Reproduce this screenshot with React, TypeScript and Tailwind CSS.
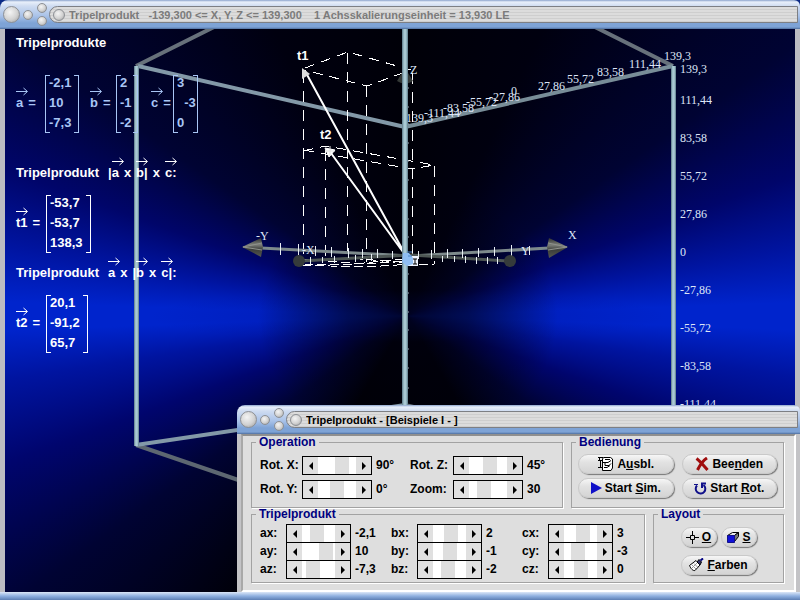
import { useRef, type ReactNode } from "react";

type Vec = { values: string[]; width: string };

const xLabels: [number, number, string][] = [
  [402, 122, "-139,3"],
  [424, 117, "-111,44"],
  [443, 112, "-83,58"],
  [466, 106, "-55,72"],
  [489, 101, "-27,86"],
  [511, 95, "0"],
  [538, 90, "27,86"],
  [567, 83, "55,72"],
  [597, 76, "83,58"],
  [629, 68, "111,44"],
  [664, 60, "139,3"],
];

const zLabels: [number, string][] = [
  [73, "139,3"],
  [104, "111,44"],
  [142, "83,58"],
  [180, "55,72"],
  [218, "27,86"],
  [256, "0"],
  [294, "-27,86"],
  [332, "-55,72"],
  [370, "-83,58"],
  [408, "-111,44"],
];

const Scene = () => (
  <svg
    className="absolute inset-0 h-full w-full"
    viewBox="5 29 790 563"
    preserveAspectRatio="xMidYMid slice"
    role="img"
    aria-label="Tripelprodukt 3D"
  >
    <defs>
      <linearGradient id="pole" x1="0" x2="1" y1="0" y2="0">
        <stop offset="0" stopColor="#5b7886" />
        <stop offset="0.35" stopColor="#a9c9d3" />
        <stop offset="0.65" stopColor="#a9c9d3" />
        <stop offset="1" stopColor="#5b7886" />
      </linearGradient>
      <linearGradient id="cone" x1="0" x2="0" y1="0" y2="1">
        <stop offset="0" stopColor="#2e302e" />
        <stop offset="0.35" stopColor="#7c7f7a" />
        <stop offset="0.6" stopColor="#3c3e3b" />
        <stop offset="1" stopColor="#55574f" />
      </linearGradient>
    </defs>

    {/* cube edges */}
    <g fill="none" strokeWidth="4">
      <path d="M136 66 214 27M673 66 595 27" stroke="#67717b" />
      <path d="M136 445 250 484" stroke="#5d6771" />
      <path d="M138 66 405 127M136 445 405 405" stroke="#8399a8" />
      <path d="M405 127 673 66" stroke="#788d98" />
    </g>

    {/* dashed boxes */}
    <g fill="none" stroke="#fff" strokeWidth="1" shapeRendering="crispEdges">
      <path
        strokeDasharray="11 8"
        d="M303.500 72V264M325.500 150V262M347.500 53V262M366.500 86V262M412.500 73V262M434.500 166V264"
      />
      <path
        strokeDasharray="10 7"
        d="M305 68 348 52 411 70 367 86 304 70M303 151 326 146 434 165 412 169 303 150"
      />
      <path
        strokeDasharray="9 4"
        d="M302 265 330 266 366 267 412 264 434 265M302 261 347 258 412 263M304 264 345 265 411 258M302 259 366 264 410 261"
      />
    </g>

    {/* axes */}
    <g fill="none">
      <path d="M261 248 411 256" stroke="#7d8a8c" strokeWidth="3" />
      <path d="M411 256 549 248" stroke="#7d8a8c" strokeWidth="3" />
      <path d="M300 261 411 255 508 261" stroke="#4d5654" strokeWidth="3" />
      <path
        stroke="#e8eef4"
        d="M280.500 243v12M298.500 244v11M315.500 246v10M331.500 247v10M348.500 248v10M362.500 249v9M377.500 249v9M392.500 251v8M418.500 251v8M431.500 250v9M447.500 249v9M462.500 249v9M478.500 248v9M494.500 247v9M511.500 245v11M529.500 246v9M442.500 256v6M454.500 256v6M465.500 256v7M476.500 257v7M487.500 257v7M497.500 257v7M507.500 258v6M310.500 257v7M322.500 257v6M334.500 256v7M355.500 255v7M371.500 254v7"
      />
      <path
        stroke="#9aa6b2"
        d="M407 88h2M407 107h2M407 124h2M407 143h2M402 143h2M407 161h2M407 180h2M402 180h2M407 200h2M407 219h2M407 237h2M407 274h2M407 293h2M407 312h2M407 330h2M407 349h2M407 368h2M407 388h2"
      />
    </g>
    <path d="M242 247 261 238 263 247 261 257Z" fill="url(#cone)" />
    <path d="M568 247 549 238 547 247 549 258Z" fill="url(#cone)" />
    <path d="M243 247 262 243M243 247 262 250M567 247 548 243M567 247 548 250" stroke="#8f928c" />
    <circle cx="299" cy="261" r="6" fill="#353b3b" />
    <circle cx="510" cy="261" r="6" fill="#353b3b" />
    <path d="M405 68 397 81Q405 86 413 81Z" fill="#343937" />

    <g className="font-['Liberation_Serif',serif] text-[12px]" fill="#dfe6f7">
      {xLabels.map(([x, y, label]) => (
        <text key={label} x={x} y={y}>{label}</text>
      ))}
      {zLabels.map(([y, label]) => (
        <text key={label} x="680" y={y}>{label}</text>
      ))}
      <text x="256" y="240">-Y</text>
      <text x="568" y="239">X</text>
      <text x="410" y="74">Z</text>
      <text x="302" y="254">-X</text>
      <text x="521" y="255">Y</text>
    </g>

    <path d="M402 405Q405 402 414 405Z" fill="#67717b" />
    <rect x="134" y="66" width="5" height="380" fill="url(#pole)" />
    <rect x="671" y="66" width="5" height="380" fill="url(#pole)" />

    {/* result vectors */}
    <path d="M406 256 305 71M406 256 328 149" stroke="#fff" strokeWidth="2" />
    <path d="M302 68 302 79 310 74Z" fill="#dcdcdc" />
    <path d="M325 148 335 150 329 157Z" fill="#fff" stroke="#fff" />
    <path d="M325 151h10M330 146v10" stroke="#ddd" />
    <rect x="405" y="256" width="13" height="10" fill="#eef4ff" />
    <path d="M413 259h4M415 259v5M413 264h4" stroke="#000" />
    <rect x="402" y="29" width="6" height="376" fill="url(#pole)" />
    <path d="M403 253h6l4 5v6l-6 2-5-4z" fill="#8fbdf2" />
    <path d="M407 252h5M408 256h4" stroke="#4f86c8" />

    <g className="font-['Liberation_Sans',sans-serif] text-[13px] font-bold" fill="#fff">
      <text x="297" y="60">t1</text>
      <text x="320" y="139">t2</text>
    </g>
  </svg>
);

/* letter with a vector arrow above it */
const Arrowed = ({ children }: { children: ReactNode }) => (
  <span className="relative inline-block">
    <svg
      className="absolute -top-[6px] left-0"
      width="13"
      height="9"
      fill="none"
      stroke="currentColor"
      aria-hidden="true"
    >
      <path d="M0 4.500H11M7.500 1 11.500 4.500 7.500 8" />
    </svg>
    {children}
  </span>
);

const Matrix = ({ values, width }: Vec) => (
  <div className={`relative pl-1 whitespace-pre ${width}`}>
    <span className="absolute top-[2px] bottom-0 left-0 w-[5px] border-y border-l border-current" />
    <span className="absolute top-[2px] right-0 bottom-0 w-[5px] border-y border-r border-current" />
    {values.map((v, i) => (
      <div key={i}>{v}</div>
    ))}
  </div>
);

const Equation = ({ name, label, ...vec }: Vec & { name: string; label: string }) => (
  <div className="flex items-center">
    <div className={`flex gap-[5px] ${label}`}>
      <Arrowed>{name}</Arrowed>
      <span>=</span>
    </div>
    <Matrix {...vec} />
  </div>
);

const Readout = () => (
  <div className="relative pt-1 pl-[11px] font-['Liberation_Sans',sans-serif] text-[13px] leading-5 font-bold text-white">
    <h1>Tripelprodukte</h1>
    <div className="mt-5 flex text-[#a9c6f5]">
      <Equation name="a" label="w-[29px]" values={["-2,1", "10", "-7,3"]} width="w-[34px]" />
      <div className="w-[11px]" />
      <Equation name="b" label="w-[26px]" values={["2", "-1", "-2"]} width="w-[22px]" />
      <div className="w-[13px]" />
      <Equation name="c" label="w-[22px]" values={["3", "  -3", "0"]} width="w-[25px]" />
    </div>
    <h2 className="mt-[30px] flex gap-[5px]">
      <span className="w-[87px]">Tripelprodukt</span>
      <span>|<Arrowed>a</Arrowed></span>
      <span>x</span>
      <span><Arrowed>b</Arrowed>|</span>
      <span>x</span>
      <span><Arrowed>c</Arrowed>:</span>
    </h2>
    <div className="mt-[10px]">
      <Equation name="t1" label="w-[30px]" values={["-53,7", "-53,7", "138,3"]} width="w-[45px]" />
    </div>
    <h2 className="mt-[10px] flex gap-[5px]">
      <span className="w-[87px]">Tripelprodukt</span>
      <Arrowed>a</Arrowed>
      <span>x</span>
      <span>|<Arrowed>b</Arrowed></span>
      <span>x</span>
      <span><Arrowed>c</Arrowed>|:</span>
    </h2>
    <div className="mt-[10px]">
      <Equation name="t2" label="w-[30px]" values={["20,1", "-91,2", "65,7"]} width="w-[42px]" />
    </div>
  </div>
);

const Knob = ({ size, label }: { size: string; label: string }) => (
  <button
    aria-label={label}
    className={`shrink-0 rounded-full border border-[#8d9095] bg-[radial-gradient(circle_at_40%_35%,#f4f4f4,#d2d2d2_55%,#9a9a9a)] ${size}`}
  />
);

const TitleBar = ({ title, color }: { title: string; color: string }) => (
  <header className="flex h-[29px] items-center rounded-tl-lg rounded-tr-md bg-[linear-gradient(#8ba3cc,#e8effa_2px,#cfdcf1_6px,#a9c2e8_16px,#7ea3d6_23px,#7ea3d6_27px,#4e6f9f)] pl-[3px]">
    <Knob size="size-[17px]" label="Schließen" />
    <div className="w-[3px]" />
    <Knob size="size-[10px]" label="Fixieren" />
    <div className="ml-1 flex flex-col gap-[3px]">
      <Knob size="size-[10px]" label="Maximieren" />
      <Knob size="size-[10px]" label="Minimieren" />
    </div>
    <div className="mr-[2px] ml-[2px] flex h-[17px] min-w-0 flex-1 items-center gap-1 rounded-l-full border border-[#7d7f84] bg-[repeating-linear-gradient(#dcdcdc_0_2px,#cecece_2px_3px)] pl-[3px]">
      <Knob size="size-[12px]" label="Menü" />
      <span className={`truncate font-['Liberation_Sans',sans-serif] text-[11px] leading-4 font-bold whitespace-pre ${color}`}>
        {title}
      </span>
    </div>
  </header>
);

type SliderProps = { id: string; label: string; value: string; pos: number };

const arrowBtn = "flex w-[15px] shrink-0 items-center justify-center bg-[#e0e0e0]";

const Slider = ({ id, label, value, pos }: SliderProps) => {
  const input = useRef<HTMLInputElement>(null);
  return (
    <>
      <label htmlFor={id}>{label}</label>
      <div className="flex h-[19px] border border-black bg-white">
        <button className={arrowBtn} aria-label={`${label} -`} onClick={() => input.current?.stepDown()}>
          <svg width="4" height="8"><path d="M4 0V8L0 4Z" /></svg>
        </button>
        <input
          ref={input}
          id={id}
          type="range"
          defaultValue={pos}
          className="h-full w-full min-w-0 flex-1 appearance-none bg-white [&::-webkit-slider-thumb]:h-[17px] [&::-webkit-slider-thumb]:w-[14px] [&::-webkit-slider-thumb]:appearance-none [&::-webkit-slider-thumb]:bg-[#dedede]"
        />
        <button className={arrowBtn} aria-label={`${label} +`} onClick={() => input.current?.stepUp()}>
          <svg width="4" height="8"><path d="M0 0V8L4 4Z" /></svg>
        </button>
      </div>
      <output htmlFor={id} className="pl-1">{value}</output>
    </>
  );
};

const Group = ({ title, className, children }: { title: string; className: string; children: ReactNode }) => (
  <fieldset className={`min-w-0 border border-[#a2a2a2] shadow-[1px_1px_0_#fff] ${className}`}>
    <legend className="ml-[4px] px-[3px] leading-3 text-[#000080]">{title}</legend>
    {children}
  </fieldset>
);

const PushButton = ({ icon, className = "", children }: { icon: ReactNode; className?: string; children: ReactNode }) => (
  <button
    className={`flex h-5 items-center justify-center gap-[3px] rounded-full border border-[#c9c9c9] bg-[linear-gradient(#f6f6f6,#e2e2e2_40%,#d4d4d4)] shadow-[1px_1px_1px_#777] ${className}`}
  >
    {icon}
    <span>{children}</span>
  </button>
);

const HideIcon = () => (
  <svg width="17" height="16" fill="none" stroke="#000">
    <path d="M5.500 3 6.500 1.500H13.500L15.500 3V12L14 14.500H5.500Z" fill="#fff" />
    <path d="M1 1.500H6M2.500 1V5M1 4.500H5M3.500 5V11M1 11.500H5" />
    <path d="M8 3.500H13M6 6.500H11L14 4.500M8 6.500V9.500H12L14 7.500M7 11.500H10L13 9.500" />
  </svg>
);

const CrossIcon = () => (
  <svg width="14" height="14" fill="none" stroke="#a00d0d" strokeWidth="3">
    <path d="M1.500 1.500C5 4 9 9 12.500 13M12 1C8 3.500 5 8 2.500 13" />
  </svg>
);

const RotateIcon = () => (
  <svg width="13" height="13" fill="none" stroke="#10108a" strokeWidth="2">
    <path d="M3 3.500A4.800 4.800 0 1 0 9.500 3" />
    <path d="M8 6V1.500H12" />
    <path d="M0 2.500H4" strokeWidth="1" />
  </svg>
);

const OriginIcon = () => (
  <svg width="13" height="13" fill="none" stroke="#000">
    <path d="M0 6.500H4M9 6.500H13M6.500 0V4M6.500 9V13M4.500 4.500H8.500V8.500H4.500Z" />
  </svg>
);

const SolidIcon = () => (
  <svg width="13" height="12" stroke="#000">
    <path d="M1.500 4.500 6.500 1.500H12.500L8.500 4.500Z" fill="#e8e8e8" />
    <path d="M8.500 4.500 12.500 1.500V5.500L8.500 10.500Z" fill="#777" />
    <path d="M1.500 4.500H8.500V11.500H1.500Z" fill="#1010d8" stroke="#10108a" />
  </svg>
);

const BrushIcon = () => (
  <svg width="15" height="14" stroke="#000">
    <path d="M.5 7.500 7 2.500 11 7 6 12.500C4 13 2 11 .5 7.500Z" fill="#fff" />
    <path d="M3 7 7 11M5 5.500 9 9.500M3 10 8 5" stroke="#999" />
    <path d="M8 4 10 1.500 12.500 4 11 7Z" fill="#30306a" />
    <path d="M11.500 2.500 14 .5" stroke="#000080" strokeWidth="2" />
  </svg>
);

const components: [string, string, number][] = [
  ["ax", "-2,1", 43],
  ["bx", "2", 58],
  ["cx", "3", 62],
  ["ay", "10", 92],
  ["by", "-1", 50],
  ["cy", "-3", 36],
  ["az", "-7,3", 22],
  ["bz", "-2", 43],
  ["cz", "0", 52],
];

const ControlPanel = () => (
  <section className="absolute right-0 bottom-0 w-[563px] max-w-full font-['Liberation_Sans',sans-serif] text-[12px] leading-[18px] font-bold text-black">
    <TitleBar title="Tripelprodukt - [Beispiele I - ]" color="text-black" />
    <div className="border-x-4 border-x-[#c3c3c6] bg-[#dedede]">
      <div className="border-2 border-t-[#8f8f8f] border-r-white border-b-white border-l-[#a8a8a8] pr-[10px] pb-[7px] pl-2">
        <div className="flex gap-2">
          <Group title="Operation" className="h-[72px] flex-1">
            <div className="grid grid-cols-[42px_70px_38px_43px_70px_1fr] gap-y-[5px] pt-2 pl-2">
              <Slider id="rotx" label="Rot. X:" value="90°" pos={71} />
              <Slider id="rotz" label="Rot. Z:" value="45°" pos={57} />
              <Slider id="roty" label="Rot. Y:" value="0°" pos={50} />
              <Slider id="zoom" label="Zoom:" value="30" pos={33} />
            </div>
          </Group>
          <Group title="Bedienung" className="h-[72px] w-[213px]">
            <div className="grid grid-cols-2 gap-x-2 gap-y-1 px-[6px] pt-[6px]">
              <PushButton icon={<HideIcon />}>A<u>u</u>sbl.</PushButton>
              <PushButton icon={<CrossIcon />}>Bee<u>n</u>den</PushButton>
              <PushButton
                icon={<svg width="11" height="12"><path d="M0 0 11 6 0 12Z" fill="#1010c8" /></svg>}
              >
                Start <u>S</u>im.
              </PushButton>
              <PushButton icon={<RotateIcon />}>Start <u>R</u>ot.</PushButton>
            </div>
          </Group>
        </div>
        <div className="flex gap-2">
          <Group title="Tripelprodukt" className="h-[75px] flex-1">
            <div className="grid auto-rows-[18px] grid-cols-[26px_65px_40px_26px_65px_40px_26px_65px_1fr] pt-1 pl-2">
              {components.map(([id, value, pos]) => (
                <Slider key={id} id={id} label={`${id}:`} value={value} pos={pos} />
              ))}
            </div>
          </Group>
          <Group title="Layout" className="h-[75px] w-[131px]">
            <div className="mx-auto grid w-[76px] grid-cols-2 gap-x-1 gap-y-2 pt-[7px]">
              <PushButton icon={<OriginIcon />}><u>O</u></PushButton>
              <PushButton icon={<SolidIcon />}><u>S</u></PushButton>
              <PushButton icon={<BrushIcon />} className="col-span-2"><u>F</u>arben</PushButton>
            </div>
          </Group>
        </div>
      </div>
    </div>
    <div className="h-2 rounded-b bg-[linear-gradient(#dbe6f7,#8fb0e0_50%,#5d7fb4)]" />
  </section>
);

const App = () => (
  <div className="relative flex min-h-screen flex-col overflow-hidden bg-[#0b2a86]">
    <TitleBar
      title="Tripelprodukt   -139,300 <= X, Y, Z <= 139,300    1 Achsskalierungseinheit = 13,930 LE"
      color="text-[#7b7b7b]"
    />
    <main className="relative flex-1 overflow-hidden border-x-[5px] border-x-[#bcbcc2] bg-[radial-gradient(ellipse_150px_130px_at_51%_51%,#000010d0,#00000c90_40%,#00000800),radial-gradient(ellipse_260px_26px_at_51%_51%,#0014a0a0,#0014a000),conic-gradient(from_0deg_at_51%_51%,#000008,#00000f_25deg,#000333_55deg,#00056a_70deg,#0014a0_80deg,#0024cc_88deg,#0024cc_92deg,#0014a0_99deg,#00056e_110deg,#000333_126deg,#000008_150deg,#000006_210deg,#000333_234deg,#00056e_250deg,#0014a0_261deg,#0024cc_268deg,#0024cc_272deg,#0014a0_280deg,#00056a_290deg,#000333_305deg,#00000f_335deg,#000008)]">
      <Scene />
      <Readout />
    </main>
    <div className="h-2 bg-[linear-gradient(#dbe6f7,#8fb0e0_50%,#5d7fb4)]" />
    <ControlPanel />
  </div>
);

export default App;
